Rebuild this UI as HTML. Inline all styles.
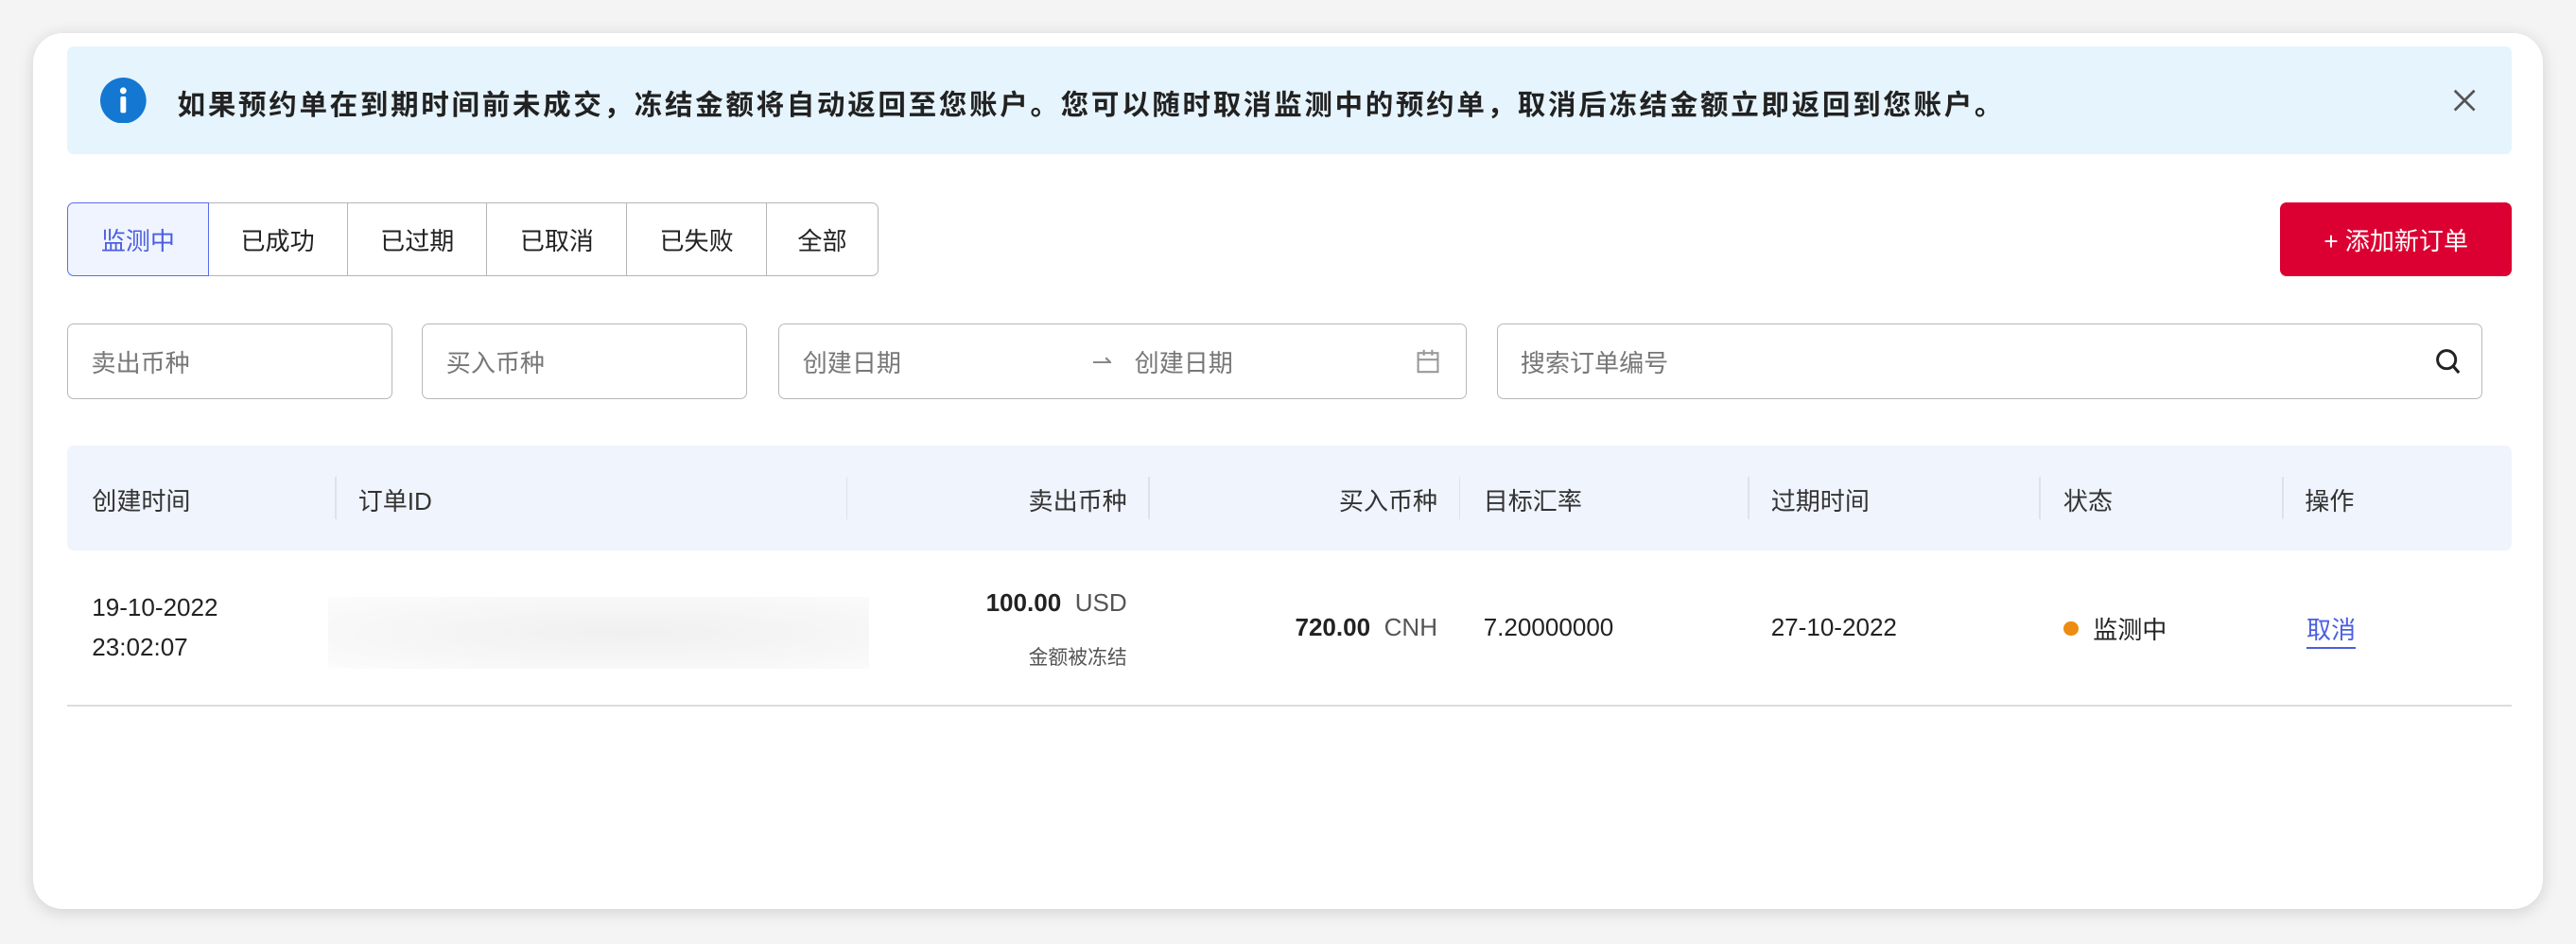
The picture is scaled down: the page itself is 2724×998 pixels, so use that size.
<!DOCTYPE html>
<html><head><meta charset="utf-8"><style>
html,body{margin:0;padding:0;width:2724px;height:998px;overflow:hidden;background:#f4f4f4;}
#w{zoom:1.7372;position:relative;width:1568px;height:574.5px;font-family:"Liberation Sans","Noto Sans CJK SC",sans-serif;color:#222;}
.a{position:absolute;}
.card{left:20px;top:20px;width:1528px;height:533px;background:#fff;border-radius:18px;box-shadow:0 2px 10px rgba(0,0,0,.14);}
.alert{left:41px;top:28px;width:1488px;height:66px;background:#e6f4fd;border-radius:4px;}
.tab{top:123px;height:45px;border:1px solid #b5b5b5;box-sizing:border-box;font-size:15px;display:flex;align-items:center;justify-content:center;background:#fff;}
.inp{top:197px;height:46px;border:1px solid #b8b8b8;border-radius:4px;box-sizing:border-box;font-size:15px;color:#777;display:flex;align-items:center;padding-left:14px;}
.th{top:271px;height:64px;left:41px;width:1488px;background:#eff4fd;border-radius:4px;}
.h{top:293px;font-size:15px;color:#333;}
.dv{top:290px;width:1px;height:26px;background:#dde3ee;}
.c{font-size:15px;color:#222;}
</style></head><body><div id="w">
<div class="a card"></div>
<div class="a alert"></div>
<svg class="a" style="left:61px;top:47px" width="28" height="28" viewBox="0 0 28 28"><circle cx="14" cy="14" r="14" fill="#1478d2"/><circle cx="14" cy="8" r="2" fill="#fff"/><rect x="12.3" y="11.5" width="3.4" height="10" rx="1" fill="#fff"/></svg>
<div class="a" style="left:108px;top:50px;font-size:17px;letter-spacing:1.55px;font-weight:bold;color:#222;white-space:nowrap">如果预约单在到期时间前未成交，冻结金额将自动返回至您账户。您可以随时取消监测中的预约单，取消后冻结金额立即返回到您账户。</div>
<svg class="a" style="left:1493px;top:54px" width="14" height="14" viewBox="0 0 14 14"><path d="M1 1L13 13M13 1L1 13" stroke="#555" stroke-width="1.6"/></svg>

<div class="a tab" style="left:41px;width:86px;border-color:#5a6cf0;background:#f0f4ff;color:#4b5ee0;border-radius:4px 0 0 4px;z-index:2">监测中</div>
<div class="a tab" style="left:126px;width:86px">已成功</div>
<div class="a tab" style="left:211px;width:86px">已过期</div>
<div class="a tab" style="left:296px;width:86px">已取消</div>
<div class="a tab" style="left:381px;width:86px">已失败</div>
<div class="a tab" style="left:466px;width:69px;border-radius:0 4px 4px 0">全部</div>

<div class="a" style="left:1388px;top:123px;width:141px;height:45px;background:#dc0032;border-radius:4px;color:#fff;font-size:15px;display:flex;align-items:center;justify-content:center">+ 添加新订单</div>

<div class="a inp" style="left:41px;width:198px">卖出币种</div>
<div class="a inp" style="left:257px;width:198px">买入币种</div>
<div class="a inp" style="left:474px;width:419px">创建日期<span style="position:absolute;left:190px;color:#888">⇀</span><span style="position:absolute;left:216px">创建日期</span>
<svg style="position:absolute;left:387px;top:14px" width="15" height="16" viewBox="0 0 15 16"><rect x="1.5" y="3" width="12" height="11.5" fill="none" stroke="#999" stroke-width="1.2"/><path d="M1.5 7H13.5M5 1V4.5M10 1V4.5" stroke="#999" stroke-width="1.2"/></svg></div>
<div class="a inp" style="left:911px;width:600px">搜索订单编号
<svg style="position:absolute;right:12px;top:14px" width="16" height="17" viewBox="0 0 16 17"><circle cx="7" cy="7" r="5.5" fill="none" stroke="#222" stroke-width="1.7"/><path d="M11 11L14.5 15" stroke="#222" stroke-width="1.8"/></svg></div>

<div class="a th"></div>
<div class="a h" style="left:56px">创建时间</div>
<div class="a dv" style="left:204px"></div>
<div class="a h" style="left:218px">订单ID</div>
<div class="a dv" style="left:515px"></div>
<div class="a h" style="right:882px">卖出币种</div>
<div class="a dv" style="left:699px"></div>
<div class="a h" style="right:693px">买入币种</div>
<div class="a dv" style="left:888px"></div>
<div class="a h" style="left:903px">目标汇率</div>
<div class="a dv" style="left:1064px"></div>
<div class="a h" style="left:1078px">过期时间</div>
<div class="a dv" style="left:1241px"></div>
<div class="a h" style="left:1256px">状态</div>
<div class="a dv" style="left:1389px"></div>
<div class="a h" style="left:1403px">操作</div>

<div class="a c" style="left:56px;top:358px;line-height:24px">19-10-2022<br>23:02:07</div>
<div class="a" style="left:200px;top:363px;width:329px;height:44px;background:radial-gradient(ellipse at 55% 50%,#f0f0f0,#f8f8f8 70%,#fcfcfc)"></div>
<div class="a c" style="right:882px;top:358px"><b>100.00</b>&nbsp; <span style="color:#555">USD</span></div>
<div class="a" style="right:882px;top:391px;font-size:12px;color:#555">金额被冻结</div>
<div class="a c" style="right:693px;top:373px"><b>720.00</b>&nbsp; <span style="color:#555">CNH</span></div>
<div class="a c" style="left:903px;top:373px">7.20000000</div>
<div class="a c" style="left:1078px;top:373px">27-10-2022</div>
<div class="a" style="left:1256px;top:378px;width:9px;height:9px;border-radius:50%;background:#ec8c12"></div>
<div class="a c" style="left:1274px;top:371px">监测中</div>
<div class="a c" style="left:1404px;top:371px;color:#4b5ee0;border-bottom:1.5px solid #4b5ee0;padding-bottom:1px">取消</div>
<div class="a" style="left:41px;top:429px;width:1488px;height:1px;background:#dcdcdc"></div>
</div></body></html>
